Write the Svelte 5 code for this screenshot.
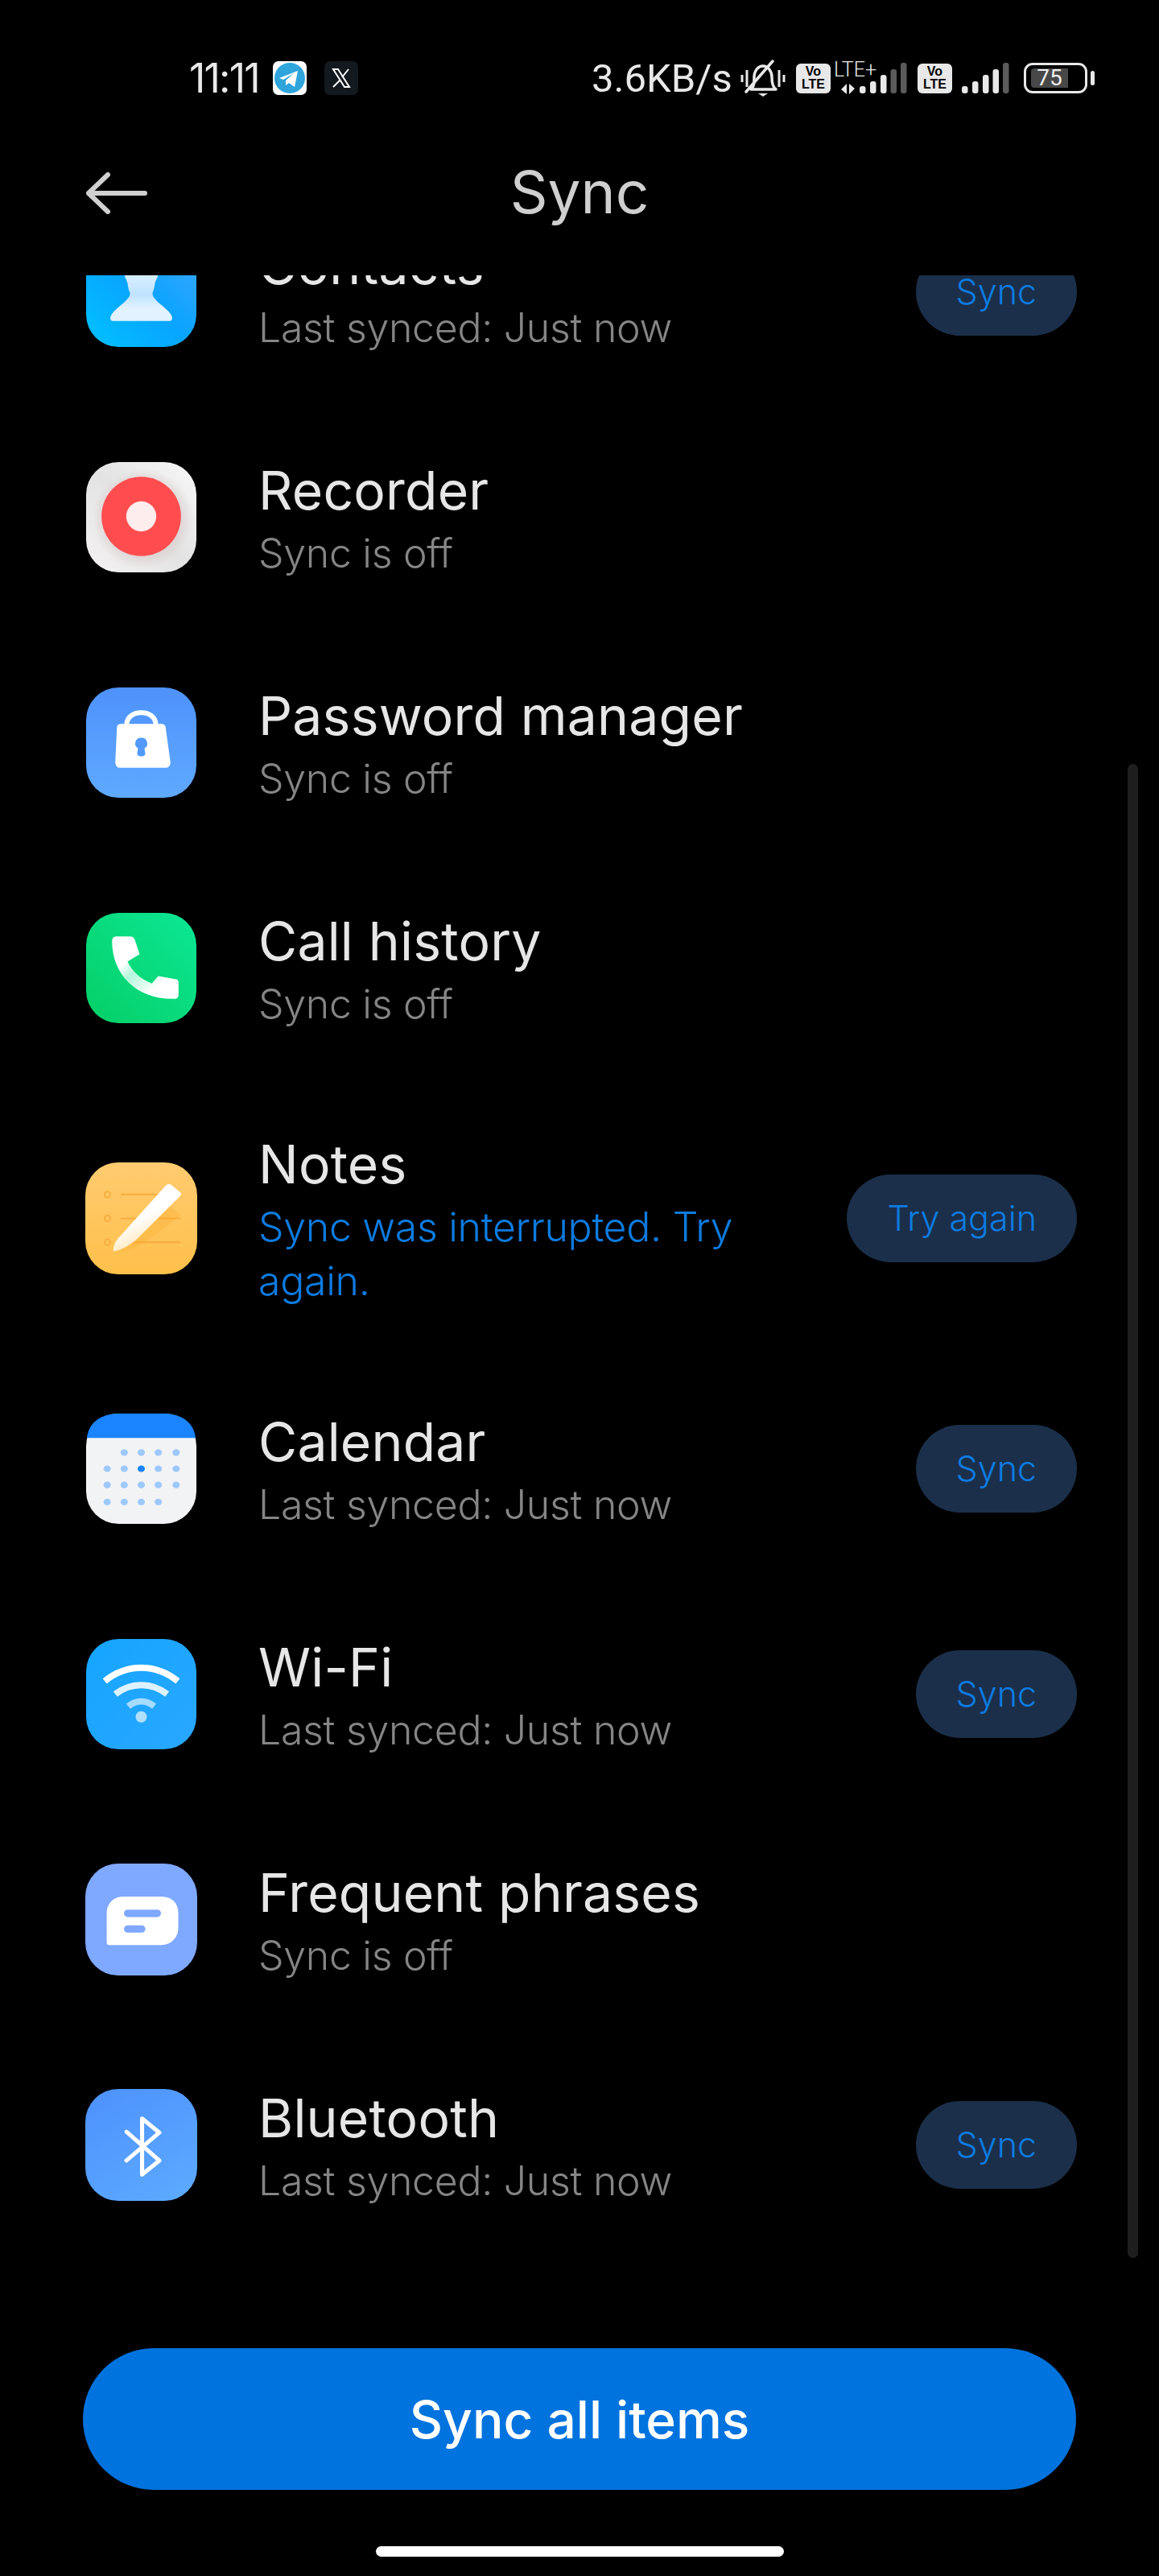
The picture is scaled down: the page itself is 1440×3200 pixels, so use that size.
<script>
  const items = [
    { id: "contacts", name: "Contacts", status: "Last synced: Just now", action: "Sync" },
    { id: "recorder", name: "Recorder", status: "Sync is off" },
    { id: "password", name: "Password manager", status: "Sync is off" },
    { id: "calls", name: "Call history", status: "Sync is off" },
    { id: "notes", name: "Notes", status: "Sync was interrupted. Try again.", action: "Try again", warn: true, wide: true },
    { id: "calendar", name: "Calendar", status: "Last synced: Just now", action: "Sync" },
    { id: "wifi", name: "Wi-Fi", status: "Last synced: Just now", action: "Sync" },
    { id: "phrases", name: "Frequent phrases", status: "Sync is off", wide: true },
    { id: "bluetooth", name: "Bluetooth", status: "Last synced: Just now", action: "Sync", wide: true },
  ];

  const dotRows = [
    [0, 1, 1, 1, 1],
    [1, 1, 2, 1, 1],
    [1, 1, 1, 1, 1],
    [1, 1, 1, 1, 0],
  ];
  const dotX = [26, 47, 68, 89, 111];
  const dotY = [48, 68, 88, 109];

  // signal bar heights, same for both sims
  const barX = [0, 13, 26, 38.5, 51];
  const barH = [9, 15, 23, 30, 38];
</script>

{#snippet icon(id, wide)}
  <svg class="app-icon" class:wide viewBox="0 0 136 136">
    <defs>
      <linearGradient id="g-contacts" x1="0" y1="1" x2="1" y2="0">
        <stop offset="0" stop-color="#00c2ff" />
        <stop offset="0.5" stop-color="#09a4ff" />
        <stop offset="1" stop-color="#42a6ff" />
      </linearGradient>
      <linearGradient id="g-person" x1="0" y1="0" x2="0" y2="1">
        <stop offset="0" stop-color="#f2f9ff" />
        <stop offset="0.6" stop-color="#bfe3ff" />
        <stop offset="0.8" stop-color="#e2f2ff" />
      </linearGradient>
      <linearGradient id="g-recorder" x1="1" y1="0" x2="0" y2="1">
        <stop offset="0" stop-color="#f8f8f8" />
        <stop offset="0.5" stop-color="#e3e3e3" />
        <stop offset="1" stop-color="#f5f3f3" />
      </linearGradient>
      <linearGradient id="g-password" x1="0" y1="0" x2="0" y2="1">
        <stop offset="0" stop-color="#4e92fb" />
        <stop offset="1" stop-color="#5fa9ff" />
      </linearGradient>
      <linearGradient id="g-calls" x1="1" y1="0" x2="0" y2="1">
        <stop offset="0" stop-color="#0ce795" />
        <stop offset="1" stop-color="#05cf66" />
      </linearGradient>
      <linearGradient id="g-handset" x1="0" y1="0" x2="1" y2="1">
        <stop offset="0.3" stop-color="#ffffff" />
        <stop offset="0.45" stop-color="#b4f8dc" />
        <stop offset="0.75" stop-color="#ffffff" />
      </linearGradient>
      <linearGradient id="g-notes" x1="0" y1="0" x2="0" y2="1">
        <stop offset="0" stop-color="#ffcb70" />
        <stop offset="1" stop-color="#ffc04b" />
      </linearGradient>
      <linearGradient id="g-pencil" x1="0.6" y1="0.4" x2="0.8" y2="0.8">
        <stop offset="0" stop-color="#ffffff" />
        <stop offset="1" stop-color="#fde3ad" />
      </linearGradient>
      <linearGradient id="g-wifi" x1="0" y1="0" x2="1" y2="1">
        <stop offset="0" stop-color="#14a5ff" />
        <stop offset="1" stop-color="#2aa7ff" />
      </linearGradient>
      <linearGradient id="g-bluetooth" x1="0.2" y1="0" x2="0.8" y2="1">
        <stop offset="0" stop-color="#4e93fd" />
        <stop offset="1" stop-color="#5ca9ff" />
      </linearGradient>
      <radialGradient id="g-halo">
        <stop offset="0.7" stop-color="#d9c9c9" stop-opacity="0.7" />
        <stop offset="1" stop-color="#d9c9c9" stop-opacity="0" />
      </radialGradient>
    </defs>

    {#if id === "contacts"}
      <rect width="136" height="136" rx="40" fill="url(#g-contacts)" />
      <path
        d="M68 24c-12 0-21 8-21 20 0 6 3 9 4 13 1 5 1 8 3 12 1 4-3 8-8 13-6 5-11 9-14 13-3 4-3 9 1 9h70c4 0 4-5 1-9-3-4-8-8-14-13-5-5-9-9-8-13 2-4 2-7 3-12 1-4 4-7 4-13 0-12-9-20-21-20z"
        fill="url(#g-person)"
      />
    {:else if id === "recorder"}
      <rect width="136" height="136" rx="40" fill="url(#g-recorder)" />
      <circle cx="70" cy="70" r="62" fill="url(#g-halo)" />
      <circle cx="68" cy="67" r="49" fill="#ff4d4f" />
      <circle cx="68" cy="67" r="18.5" fill="#fdeded" />
    {:else if id === "password"}
      <rect width="136" height="136" rx="40" fill="url(#g-password)" />
      <path d="M50 46c0-20 36-20 36 0" fill="none" stroke="#fff" stroke-width="6" />
      <path
        d="M43 45h50c3 0 5 2 5 4l6 43c0 4-2 7-6 7H42c-4 0-6-3-6-7l2-43c0-2 2-4 5-4z"
        fill="#fff"
      />
      <path d="M68 62a7 7 0 0 1 4 13l1 7c0 2-2 3-5 3s-5-1-5-3l1-7a7 7 0 0 1 4-13z" fill="#519afc" />
    {:else if id === "calls"}
      <rect width="136" height="136" rx="40" fill="url(#g-calls)" />
      <path
        d="M38 29h16c3 0 5 1 6 4l6 18-15 9c6 12 15 21 30 27l8-9 22 4c2 0 3 2 3 4v15c0 3-2 5-5 5-47 1-77-30-77-71 0-4 2-6 6-6z"
        fill="url(#g-handset)"
      />
    {:else if id === "notes"}
      <rect width="136" height="136" rx="40" fill="url(#g-notes)" />
      <g fill="none" stroke="#f7a93a" stroke-width="2" opacity="0.8">
        <circle cx="27" cy="39" r="3.5" />
        <circle cx="27" cy="68" r="3.5" />
        <circle cx="27" cy="97" r="3.5" />
        <path d="M43 39h73M43 68h73M43 97h73" />
      </g>
      <path d="M34 108c22 2 40-10 82-44-6-6-12-10-18-12L44 90c-6 5-10 12-10 18z" fill="#f9a825" opacity="0.25" />
      <path
        d="M34 108c0-7 3-14 9-19l55-61c2-2 4-2 6-1l11 9c2 2 2 3 0 5L61 95c-8 6-17 12-27 13z"
        fill="url(#g-pencil)"
      />
    {:else if id === "calendar"}
      <rect width="136" height="136" rx="40" fill="#f2f3f5" />
      <path d="M1 30C3 10 20 0 40 0h56c20 0 37 10 39 30z" fill="#1a84ff" />
      {#each dotRows as row, r}
        {#each row as dot, c}
          {#if dot}
            <ellipse
              cx={dotX[c]}
              cy={dotY[r]}
              rx="4.5"
              ry="4"
              fill={dot === 2 ? "#1a84ff" : "#9dc8fb"}
            />
          {/if}
        {/each}
      {/each}
    {:else if id === "wifi"}
      <rect width="136" height="136" rx="40" fill="url(#g-wifi)" />
      <g fill="none" stroke-width="8">
        <path d="M23 52c27-22 63-22 90 0" stroke="#fff" />
        <path d="M36 68c19-15 45-15 64 0" stroke="#fff" stroke-opacity="0.85" />
        <path d="M52 83c10-8 22-8 32 0" stroke="#fff" stroke-opacity="0.6" />
      </g>
      <circle cx="68" cy="96" r="7" fill="#fff" fill-opacity="0.65" />
    {:else if id === "phrases"}
      <rect width="136" height="136" rx="40" fill="#7fa8ff" />
      <path d="M26 60c0-12 9-20 20-20h47c12 0 20 8 20 20v18c0 12-9 21-21 21H29c-2 0-3-1-3-3z" fill="#fff" />
      <rect x="47" y="56" width="45" height="9" rx="4.5" fill="#7fa8ff" />
      <rect x="47" y="75" width="26" height="9" rx="4.5" fill="#7fa8ff" />
    {:else if id === "bluetooth"}
      <rect width="136" height="136" rx="40" fill="url(#g-bluetooth)" />
      <path
        d="M50 52l40 35-21 17V36l21 17-40 34"
        fill="none"
        stroke="#fff"
        stroke-width="5"
        stroke-linecap="round"
        stroke-linejoin="round"
      />
    {/if}
  </svg>
{/snippet}

{#snippet volte()}
  <span class="volte"><span>Vo</span><span>LTE</span></span>
{/snippet}

{#snippet bars(lit, cls)}
  <svg class="bars {cls}" viewBox="0 0 59 38">
    {#each barX as x, i}
      <rect
        {x}
        y={38 - barH[i]}
        width="7.5"
        height={barH[i]}
        rx="3"
        fill={i < lit ? "#e8e8e8" : "#5b5b5b"}
      />
    {/each}
  </svg>
{/snippet}

<main class="screen">
  <div class="status-bar">
    <div class="status-left">
      <span class="clock">11:11</span>
      <svg class="notif" viewBox="0 0 42 42">
        <rect width="42" height="42" rx="7" fill="#fff" />
        <circle cx="21" cy="21" r="19" fill="#2fa5dc" />
        <path d="M8 21l23-9-4 20-7-5-4 3 0-6 10-9-13 8z" fill="#fff" />
      </svg>
      <svg class="notif" viewBox="0 0 42 42">
        <rect width="42" height="42" rx="7" fill="#12191f" />
        <path d="M11 10h6l14 22h-6zM30 10l-8 10M19 24l-8 8" fill="none" stroke="#fff" stroke-width="2" />
      </svg>
    </div>
    <div class="status-right">
      <span class="speed">3.6KB/s</span>
      <svg class="bell" viewBox="0 0 56 47" fill="none" stroke="#e8e8e8" stroke-width="3.5">
        <path d="M2 19v9M8 13v21M48 13v21M54 19v9" stroke-width="3" />
        <path d="M13 37c4-3 4-8 4-15 0-8 5-14 11-14s11 6 11 14c0 7 1 12 5 15z" stroke-linejoin="round" />
        <path d="M40 2L7 40" stroke-linecap="round" />
        <path d="M22 42h12l-6 4z" fill="#e8e8e8" stroke="none" />
      </svg>
      {@render volte()}
      <div class="sim-first">
        <span class="lte">LTE+</span>
        <svg class="arrows" viewBox="0 0 19 13"><path d="M8 0v13L1 7zM11 13V0l7 6z" fill="#e8e8e8" /></svg>
      </div>
      {@render bars(3, "first")}
      {@render volte()}
      {@render bars(4, "second")}
      <div class="battery">
        <div class="battery-body"><span class="battery-level">75</span></div>
        <span class="battery-nub"></span>
      </div>
    </div>
  </div>

  <header class="title-bar">
    <svg class="back" viewBox="0 0 76 52" fill="none" stroke="#d0d0d0" stroke-width="6" stroke-linecap="round" stroke-linejoin="round">
      <path d="M73 26H3M27 3L3 26l24 23" />
    </svg>
    <h1>Sync</h1>
  </header>

  <div class="list-viewport">
    <ul class="list">
      {#each items as item}
        <li class="row">
          {@render icon(item.id, item.wide)}
          <div class="copy">
            <div class="name">{item.name}</div>
            <div class="state" class:warn={item.warn}>{item.status}</div>
          </div>
          {#if item.action}
            <button class="pill">{item.action}</button>
          {/if}
        </li>
      {/each}
    </ul>
    <span class="scrollbar"></span>
  </div>

  <footer class="footer">
    <button class="sync-all">Sync all items</button>
    <span class="home-bar"></span>
  </footer>
</main>

<style>
  :global(body) {
    margin: 0;
    background: #000;
  }

  .screen {
    width: 1440px;
    height: 3200px;
    background: #000;
    color: #e6e6e6;
    font-family: Inter, "Noto Sans", sans-serif;
    display: flex;
    flex-direction: column;
    overflow: hidden;
  }

  .status-bar {
    height: 74px;
    padding-top: 60px;
    display: flex;
    justify-content: space-between;
    align-items: center;
    padding-left: 235px;
    padding-right: 80px;
    color: #e8e8e8;
  }

  .status-left,
  .status-right {
    display: flex;
    align-items: center;
  }

  .clock {
    font-size: 50px;
    letter-spacing: -1.8px;
    width: 104px;
  }

  .notif {
    width: 42px;
    height: 42px;
    margin-right: 22px;
  }

  .speed {
    font-family: Roboto, sans-serif;
    font-size: 49px;
    width: 185px;
  }

  .bell {
    width: 56px;
    height: 47px;
    margin-right: 13px;
  }

  .volte {
    width: 43px;
    height: 37px;
    border-radius: 6px;
    background: #e8e8e8;
    color: #000;
    font-family: "Liberation Sans", sans-serif;
    font-size: 16px;
    font-weight: 700;
    line-height: 16px;
    display: flex;
    flex-direction: column;
    align-items: center;
    justify-content: center;
  }

  .sim-first {
    width: 56px;
    height: 41px;
    margin-left: 4px;
    display: flex;
    flex-direction: column;
  }

  .lte {
    font-family: Roboto, sans-serif;
    font-size: 25px;
    line-height: 20px;
    font-weight: 300;
  }

  .arrows {
    width: 19px;
    height: 13px;
    margin: 7px 0 0 8px;
  }

  .bars {
    width: 59px;
    height: 38px;
  }

  .bars.first {
    margin: 0 13px 0 -24px;
  }

  .bars.second {
    margin: 0 18px 0 12px;
  }

  .battery {
    display: flex;
    align-items: center;
    gap: 4px;
  }

  .battery-body {
    width: 79px;
    height: 38px;
    box-sizing: border-box;
    border: 3px solid #e8e8e8;
    border-radius: 11px;
    padding: 4px 0 4px 6px;
    display: flex;
  }

  .battery-level {
    width: 46px;
    background: #484848;
    border-radius: 4px 0 0 4px;
    font-family: Roboto, sans-serif;
    font-size: 28px;
    line-height: 24px;
    text-align: center;
    color: #eee;
  }

  .battery-nub {
    width: 5px;
    height: 18px;
    border-radius: 3px;
    background: #e8e8e8;
  }

  .title-bar {
    height: 208px;
    position: relative;
    display: flex;
    align-items: center;
    justify-content: center;
  }

  .back {
    position: absolute;
    left: 107px;
    top: 80px;
    width: 76px;
    height: 52px;
  }

  h1 {
    margin: 0;
    font-size: 73px;
    font-weight: 400;
    color: #cfcfcf;
  }

  .list-viewport {
    position: relative;
    height: 2520px;
    overflow: hidden;
  }

  .list {
    list-style: none;
    margin: -120px 0 0;
    padding: 0;
  }

  .row {
    min-height: 280px;
    box-sizing: border-box;
    padding: 59px 102px 59px 107px;
    display: flex;
    align-items: center;
  }

  .app-icon {
    width: 137px;
    height: 137px;
    flex: none;
  }

  .app-icon.wide {
    width: 139px;
    height: 139px;
    margin: 0 -1px;
  }

  .copy {
    flex: 1;
    min-width: 0;
    padding-top: 6px;
    margin-left: 77px;
    margin-right: 56px;
  }

  .name {
    font-size: 66px;
    letter-spacing: 0.2px;
    line-height: 78px;
    color: #e6e6e6;
    margin-bottom: 6px;
  }

  .state {
    font-size: 50px;
    font-weight: 300;
    letter-spacing: -0.3px;
    line-height: 67px;
    color: #858585;
  }

  .state.warn {
    color: #0d7be0;
  }

  .pill {
    flex: none;
    height: 109px;
    padding: 0 50px;
    border: none;
    border-radius: 55px;
    background: #1b2f4a;
    color: #0d7be0;
    font: 300 43px Inter, sans-serif;
  }

  .scrollbar {
    position: absolute;
    left: 1401px;
    top: 607px;
    width: 13px;
    height: 1856px;
    border-radius: 7px;
    background: #1e1e1e;
  }

  .footer {
    flex: 1;
    display: flex;
    flex-direction: column;
    align-items: center;
    padding-top: 55px;
  }

  .sync-all {
    width: 1234px;
    height: 176px;
    border: none;
    border-radius: 88px;
    background: #0073de;
    color: #fff;
    font: 500 64px Inter, sans-serif;
  }

  .home-bar {
    width: 507px;
    height: 13px;
    margin-top: 70px;
    border-radius: 7px;
    background: #fff;
  }
</style>
